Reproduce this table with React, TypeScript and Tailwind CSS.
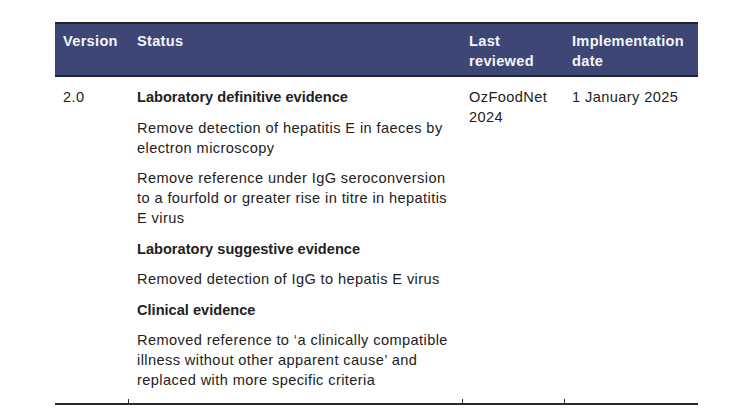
const changes = [
  { title: "Laboratory definitive evidence", bold: true },
  { title: "Remove detection of hepatitis E in faeces by electron microscopy" },
  { title: "Remove reference under IgG seroconversion to a fourfold or greater rise in titre in hepatitis E virus" },
  { title: "Laboratory suggestive evidence", bold: true },
  { title: "Removed detection of IgG to hepatis E virus" },
  { title: "Clinical evidence", bold: true },
  { title: "Removed reference to \u2018a clinically compatible illness without other apparent cause\u2019 and replaced with more specific criteria" },
]

const cols = "grid grid-cols-[73px_334px_102px_134px]"

export default function App() {
  return (
    <div className="w-[730px] h-[410px] bg-white pt-[22px] pl-[55px] font-['Liberation_Sans',Arial,sans-serif] text-[14.6px] leading-[20px] text-[#222]">
      <div className="w-[643px]">
        <div className={`${cols} bg-[#3d4674] text-[#f4f5f8] font-bold tracking-[0.3px] border-t-2 border-b-2 border-[#1e2233] h-[55px]`}>
          <div className="pl-2 pt-[7px]">Version</div>
          <div className="pl-[9px] pt-[7px]">Status</div>
          <div className="pl-[7px] pt-[7px]">Last<br />reviewed</div>
          <div className="pl-2 pt-[7px]">Implementation<br />date</div>
        </div>
        <div className={`${cols} border-b-2 border-[#2a2a2a] relative tracking-[0.4px]`}>
          <div className="pl-2 pt-[10px]">2.0</div>
          <div className="pl-[9px] pt-[10px] pb-[13px] pr-2 flex flex-col gap-[10.5px]">
            {changes.map((c, i) => (
              <p key={i} className={c.bold ? "font-bold tracking-normal" : ""}>{c.title}</p>
            ))}
          </div>
          <div className="pl-[7px] pt-[10px]">OzFoodNet<br />2024</div>
          <div className="pl-2 pt-[10px]">1 January 2025</div>
          <span className="absolute left-[73px] bottom-0 w-px h-[4px] bg-[#2a2a2a]" />
          <span className="absolute left-[407px] bottom-0 w-px h-[4px] bg-[#2a2a2a]" />
          <span className="absolute left-[509px] bottom-0 w-px h-[4px] bg-[#2a2a2a]" />
        </div>
      </div>
    </div>
  )
}
